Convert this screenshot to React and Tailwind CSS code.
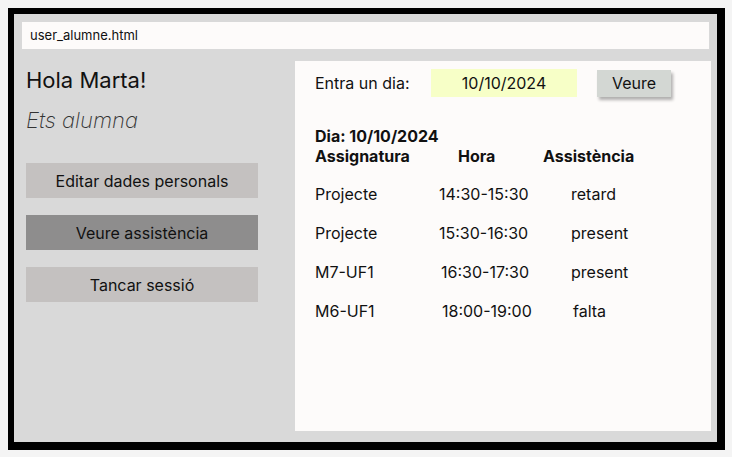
const ROWS = [
  { subject: 'Projecte', hour: '14:30-15:30', status: 'retard', hourPad: 'pl-0', statusPad: 'pl-0' },
  { subject: 'Projecte', hour: '15:30-16:30', status: 'present', hourPad: 'pl-0', statusPad: 'pl-0' },
  { subject: 'M7-UF1', hour: '16:30-17:30', status: 'present', hourPad: 'pl-[2px]', statusPad: 'pl-0' },
  { subject: 'M6-UF1', hour: '18:00-19:00', status: 'falta', hourPad: 'pl-[3px]', statusPad: 'pl-[2px]' },
];

export default function App() {
  return (
    <div className="w-[732px] h-[457px] bg-[#f4f4f4] pt-2 pl-2 text-[#111] font-['Inter',sans-serif]">
      <div className="w-[717px] h-[442px] border-l-[6px] border-t-[6px] border-r-8 border-b-8 border-black bg-[#d9d9d9] flex flex-col">
        {/* url bar */}
        <div className="mx-2 mt-2 h-[27px] bg-[#fdfbfa] flex items-center pl-2 text-[13px]">user_alumne.html</div>

        <div className="flex flex-1">
          {/* ── Sidebar ── */}
          <div className="w-[281px] pl-3 pt-[18px]">
            <h1 className="text-[22px] leading-[26px]">Hola Marta!</h1>
            <p className="mt-[14px] text-[22px] leading-[26px] italic font-extralight text-[#333]">Ets alumna</p>
            <div className="mt-[30px] flex flex-col gap-[17px] w-[232px]">
              <button className="h-[35px] bg-[#c4c1c0] text-[16px]">Editar dades personals</button>
              <button className="h-[35px] bg-[#8e8d8d] text-[16px]">Veure assistència</button>
              <button className="h-[35px] bg-[#c4c1c0] text-[16px]">Tancar sessió</button>
            </div>
          </div>

          {/* ── Panel ── */}
          <div className="w-[416px] h-[370px] mt-3 bg-[#fdfbfa] pl-5 pt-2">
            <div className="flex items-center h-[28px] text-[16px]">
              <span className="w-[116px]">Entra un dia:</span>
              <div className="w-[146px] h-[28px] bg-[#f7ffc7] flex items-center justify-center">10/10/2024</div>
              <button className="ml-5 w-[74px] h-[27px] bg-[#d3d7d3] shadow-[2px_3px_3px_rgba(0,0,0,0.3)]">Veure</button>
            </div>

            <div className="mt-[29px] font-bold text-[16px] leading-[20px]">
              <p>Dia: 10/10/2024</p>
              <div className="flex">
                <span className="w-[143px]">Assignatura</span>
                <span className="w-[85px]">Hora</span>
                <span>Assistència</span>
              </div>
            </div>

            <div className="mt-[18px] flex flex-col gap-[19px] text-[16px] leading-[20px]">
              {ROWS.map((r, i) => (
                <div key={i} className="flex">
                  <span className="w-[124px]">{r.subject}</span>
                  <span className={`w-[132px] ${r.hourPad}`}>{r.hour}</span>
                  <span className={r.statusPad}>{r.status}</span>
                </div>
              ))}
            </div>
          </div>
        </div>
      </div>
    </div>
  );
}
